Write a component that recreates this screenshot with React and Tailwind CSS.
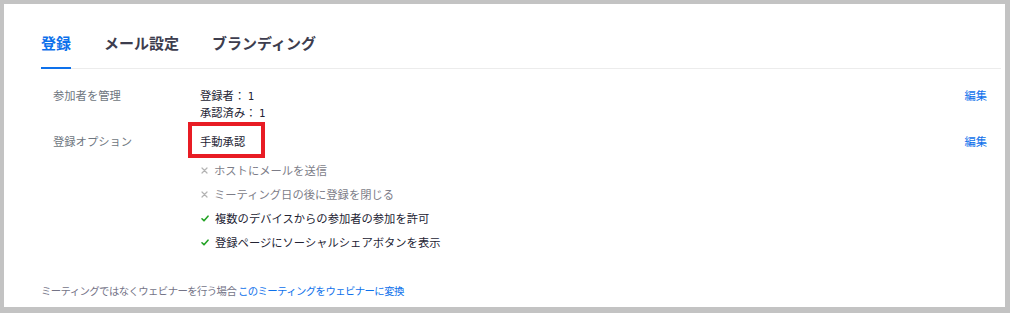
import React from "react";

const font = "font-['Noto_Sans_CJK_JP',sans-serif]";

function Cross() {
  return (
    <svg width="7" height="7" viewBox="0 0 7 7" className="shrink-0">
      <path d="M1 1L6 6M6 1L1 6" stroke="#b3b3b3" strokeWidth="1.2" strokeLinecap="round" />
    </svg>
  );
}

function Check() {
  return (
    <svg width="8" height="7" viewBox="0 0 8 7" className="shrink-0">
      <path d="M1 3.8L3 5.8L7 1.2" stroke="#23a325" strokeWidth="1.6" fill="none" strokeLinecap="round" strokeLinejoin="round" />
    </svg>
  );
}

function Item({ ok, children }) {
  return (
    <div className={`flex items-center gap-[6px] h-[16px] ${ok ? "text-[#232333]" : "text-[#7d7d88]"}`}>
      {ok ? <Check /> : <Cross />}
      <span>{children}</span>
    </div>
  );
}

export default function App() {
  return (
    <div className={`w-[1010px] h-[313px] bg-[#c3c3c3] pt-[4px] pl-[4px] pr-[5px] pb-[6px] ${font}`}>
      <div className="w-full h-full bg-white pl-[37px] pr-[4px] flex flex-col">
        {/* Tabs */}
        <div className="flex items-end gap-[33px] pt-[29px] border-b border-[#ececec] text-[15px] font-bold leading-[20px]">
          <div className="pb-[14px] border-b-2 border-[#0e71eb] text-[#0e71eb] -mb-px">登録</div>
          <div className="pb-[15px] text-[#3d3d4e]">メール設定</div>
          <div className="pb-[15px] text-[#3d3d4e]">ブランディング</div>
        </div>

        <div className="text-[11.3px] leading-[16px] pr-[14px]">
          {/* Row 1 */}
          <div className="flex mt-[18px]">
            <div className="w-[159px] pl-[12px] text-[#6e7680]">参加者を管理</div>
            <div className="flex-1 text-[#232333]">
              <div>登録者： <span className="font-['DejaVu_Sans_Mono',monospace] text-[10.5px]">1</span></div>
              <div>承認済み： <span className="font-['DejaVu_Sans_Mono',monospace] text-[10.5px]">1</span></div>
            </div>
            <div className="text-[#0e71eb]">編集</div>
          </div>

          {/* Row 2 */}
          <div className="flex mt-[12px]">
            <div className="w-[159px] pl-[12px] text-[#6e7680]">登録オプション</div>
            <div className="flex-1 text-[#232333]">
              <div className="relative w-fit">
                <span>手動承認</span>
                <div className="absolute left-[-12px] top-[-11px] w-[77px] h-[36px] border-4 border-[#e81c24]" />
              </div>
              <div className="flex flex-col gap-[8px] mt-[13px] pl-[1px]">
                <Item>ホストにメールを送信</Item>
                <Item>ミーティング日の後に登録を閉じる</Item>
                <Item ok>複数のデバイスからの参加者の参加を許可</Item>
                <Item ok>登録ページにソーシャルシェアボタンを表示</Item>
              </div>
            </div>
            <div className="text-[#0e71eb]">編集</div>
          </div>
        </div>

        {/* Footer */}
        <div className="mt-[34px] text-[10.4px] leading-[14px] tracking-[-0.6px] text-[#747487]">
          ミーティングではなくウェビナーを行う場合 <span className="text-[#0e71eb]">このミーティングをウェビナーに変換</span>
        </div>
      </div>
    </div>
  );
}
